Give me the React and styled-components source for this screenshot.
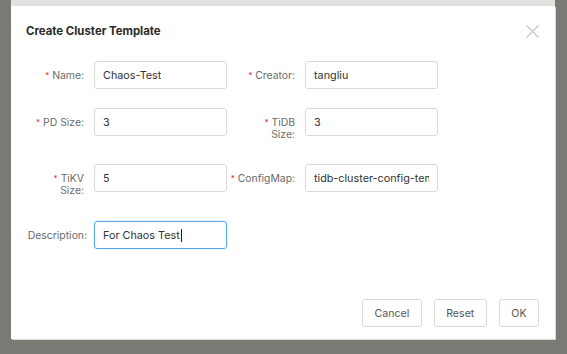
import React from 'react';
import styled, { createGlobalStyle } from 'styled-components';

const GlobalStyle = createGlobalStyle`
  html, body {
    margin: 0;
    padding: 0;
  }
  body {
    font-family: Inter, "Liberation Sans", Arial, sans-serif;
    background: #7a7974;
  }
`;

const fields = [
  [
    { label: 'Name', value: 'Chaos-Test', required: true },
    { label: 'Creator', value: 'tangliu', required: true },
  ],
  [
    { label: 'PD Size', value: '3', required: true },
    { label: 'TiDB Size', value: '3', required: true },
  ],
  [
    { label: 'TiKV Size', value: '5', required: true },
    { label: 'ConfigMap', value: 'tidb-cluster-config-template', required: true },
  ],
];

function Field({ item, labelWidth, gap }) {
  return (
    <>
      <Label $width={labelWidth}>
        <LabelText>
          {item.required && <Star>*</Star>}
          {item.label}:
        </LabelText>
      </Label>
      <InputBox $gap={gap}>
        <Value>{item.value}</Value>
      </InputBox>
    </>
  );
}

function App() {
  return (
    <Page>
      <GlobalStyle />
      <Modal>
        <TopStrip />
        <Dialog>
          <Header>
            <Title>Create Cluster Template</Title>
            <Close aria-label="close">
              <svg width="13" height="13" viewBox="0 0 13 13">
                <path d="M0.5 0.5 L12.5 12.5 M12.5 0.5 L0.5 12.5" stroke="#c4c4c4" strokeWidth="1.2" fill="none" />
              </svg>
            </Close>
          </Header>
          <Body>
            {fields.map((row, i) => (
              <Row key={i} $mb={[19, 28, 29][i]}>
                <Field item={row[0]} labelWidth={50} gap={16} />
                <Field item={row[1]} labelWidth={52} gap={0} />
              </Row>
            ))}
            <Row>
              <Label $width={50} $pull={3}>
                <LabelText>Description:</LabelText>
              </Label>
              <InputBox $focused>
                <Value>
                  For Chaos Test<Caret />
                </Value>
              </InputBox>
            </Row>
          </Body>
          <Footer>
            <Button>Cancel</Button>
            <Button>Reset</Button>
            <Button>OK</Button>
          </Footer>
        </Dialog>
      </Modal>
    </Page>
  );
}

export default App;

const Page = styled.div`
  width: 567px;
  height: 354px;
  box-sizing: border-box;
  padding: 0 12px 15px 11px;
  background: #7a7974;
  display: flex;
`;

const Modal = styled.div`
  flex: 1;
  display: flex;
  flex-direction: column;
`;

const TopStrip = styled.div`
  height: 6px;
  background: #e2e2e0;
`;

const Dialog = styled.div`
  flex: 1;
  background: #fff;
  display: flex;
  flex-direction: column;
  box-shadow: 1px 1px 0 #d6d6d4;
`;

const Header = styled.div`
  height: 50px;
  padding: 0 16px 0 15px;
  display: flex;
  align-items: center;
  justify-content: space-between;
`;

const Title = styled.div`
  font-size: 11.4px;
  font-weight: 700;
  color: #2b2b2b;
`;

const Close = styled.div`
  width: 13px;
  height: 13px;
  display: flex;
`;

const Body = styled.div`
  padding: 5px 0 0 23px;
  display: flex;
  flex-direction: column;
`;

const Row = styled.div`
  display: flex;
  align-items: flex-start;
  height: 28px;
  margin-bottom: ${p => p.$mb || 0}px;
`;

const Label = styled.div`
  width: ${p => p.$width}px;
  flex-shrink: 0;
  display: flex;
  justify-content: flex-end;
  box-sizing: border-box;
  padding-top: 8.5px;
  margin-right: ${p => 10 - (p.$pull || 0)}px;
  margin-left: ${p => p.$pull || 0}px;
`;

const LabelText = styled.div`
  font-size: 10.4px;
  line-height: 11px;
  color: #6a6a6a;
  text-align: right;
  flex-shrink: 0;
  max-width: 100%;
  min-width: min-content;
`;

const Star = styled.span`
  color: #f5222d;
  font-size: 8px;
  margin-right: 3px;
  position: relative;
  top: -1px;
`;

const InputBox = styled.div`
  width: 133px;
  height: 28px;
  flex-shrink: 0;
  box-sizing: border-box;
  padding: 0 8px;
  margin-right: ${p => p.$gap || 0}px;
  border: 1px solid ${p => (p.$focused ? '#5aa8f2' : '#d9d9d9')};
  border-radius: 3px;
  display: flex;
  align-items: center;
  box-shadow: ${p => (p.$focused ? '0 0 0 1px rgba(64,169,255,0.12)' : 'none')};
`;

const Value = styled.div`
  font-size: 10.8px;
  color: #333;
  white-space: nowrap;
  overflow: hidden;
  display: flex;
  align-items: center;
`;

const Caret = styled.span`
  display: inline-block;
  width: 1px;
  height: 13px;
  background: #222;
  margin-left: 1px;
`;

const Footer = styled.div`
  margin-top: auto;
  padding: 0 16px 12px;
  display: flex;
  justify-content: flex-end;
  gap: 12px;
`;

const Button = styled.button`
  height: 28px;
  padding: 0 11.5px;
  background: #fff;
  border: 1px solid #d9d9d9;
  border-radius: 3px;
  font-family: Inter, "Liberation Sans", Arial, sans-serif;
  font-size: 10.6px;
  color: #555;
`;
